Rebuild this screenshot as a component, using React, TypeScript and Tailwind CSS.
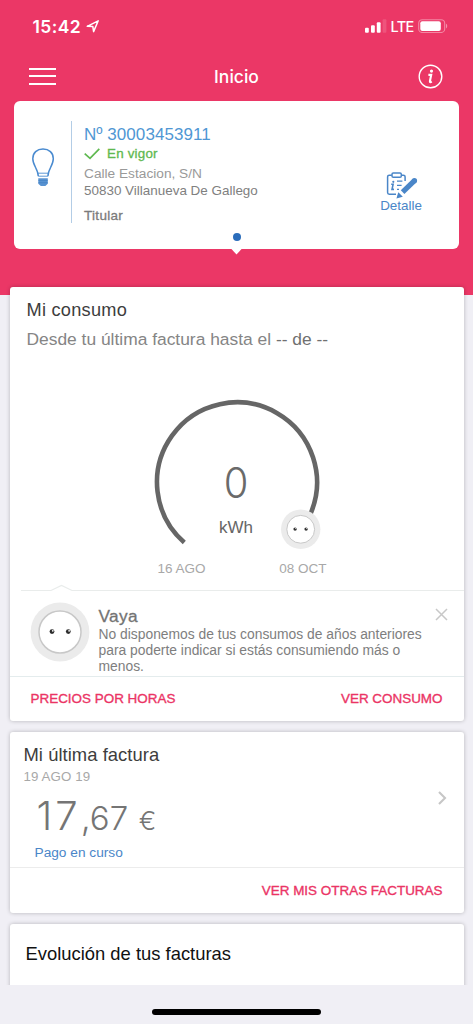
import type { ReactNode } from "react";

function StatusBar() {
  return (
    <div className="flex h-[51px] items-start justify-between pl-[32.5px] pr-[25.5px] pt-[16px] text-white">
      <div className="flex items-start gap-[4px]">
        <span className="w-[49px] whitespace-nowrap font-['Inter',sans-serif] text-[17.5px] font-semibold leading-[21px] tracking-[0.4px]">
          15:42
        </span>
        <svg className="mt-[3px]" width="14" height="14" viewBox="0 0 14 14" fill="none">
          <path d="M1.2 7.3 12.2 1.8 7.6 12.6 6.8 7.4Z" stroke="white" strokeWidth="1.5" strokeLinejoin="round" />
        </svg>
      </div>
      <div className="flex items-start">
        <svg className="mt-[3px]" width="22" height="14" viewBox="0 0 22 14" fill="white">
          <rect x="0" y="8.7" width="3.8" height="5" rx="1" />
          <rect x="6" y="6.3" width="3.8" height="7.4" rx="1" />
          <rect x="11.8" y="3.3" width="3.8" height="10.4" rx="1" />
          <rect x="17.6" y="0.3" width="3.8" height="13.4" rx="1" opacity="0.15" />
        </svg>
        <span className="ml-[4px] w-[24px] whitespace-nowrap font-['Inter',sans-serif] text-[14.5px] font-medium leading-[22px] tracking-[-0.7px]">
          LTE
        </span>
        <svg className="ml-[3px] mt-[3px]" width="30" height="14" viewBox="0 0 30 14" fill="none">
          <rect x="0.7" y="0.7" width="26" height="12.8" rx="3.6" stroke="white" strokeOpacity="0.4" strokeWidth="1.1" />
          <rect x="2.3" y="2.3" width="20.5" height="9.6" rx="2" fill="white" />
          <path d="M28 4.8c1.6.5 1.6 4.1 0 4.6Z" fill="white" fillOpacity="0.45" />
        </svg>
      </div>
    </div>
  );
}

function NavBar() {
  return (
    <div className="grid h-[50px] grid-cols-3 items-center pl-[29px] pr-[30px] text-white">
      <div className="flex w-[27px] flex-col gap-[5.5px]">
        <div className="h-[2px] bg-white" />
        <div className="h-[2px] bg-white" />
        <div className="h-[2px] bg-white" />
      </div>
      <h1 className="pl-[1px] pt-[2px] text-center font-['Inter',sans-serif] text-[17.5px] font-medium leading-[24px]">
        Inicio
      </h1>
      <svg className="justify-self-end" width="25" height="25" viewBox="0 0 25 25" fill="none">
        <circle cx="12.5" cy="12.5" r="11.3" stroke="white" strokeWidth="1.4" />
        <circle cx="13.5" cy="7.1" r="1.6" fill="white" />
        <path d="M10.4 10.9H13.2L11.9 17.2Q11.7 18.8 13.8 17.6" stroke="white" strokeWidth="2.1" />
      </svg>
    </div>
  );
}

function BulbIcon() {
  return (
    <svg width="24" height="40" viewBox="0 0 24 40" fill="none">
      <path
        d="M7.3 29.2C7.3 22.5 1.8 18.5 1.8 11.7 1.8 5.7 6 2 12 2s10.3 3.7 10.3 9.7c0 6.8-5.4 10.8-5.4 17.5"
        stroke="#4a8bd0"
        strokeWidth="1.5"
      />
      <path d="M6.8 26.2H17.4M7.4 29.2H16.8" stroke="#4a8bd0" strokeWidth="0.9" />
      <path d="M7.3 31.2h9.5v5.6l-2.4 2.2H9.8l-2.5-2.2Z" fill="#5893d2" />
      <path d="M7.3 33.4h9.5M7.3 35.7h9.5" stroke="#3f7dc0" strokeWidth="0.6" />
    </svg>
  );
}

function ContractIcon() {
  return (
    <svg width="32" height="28" viewBox="0 0 32 28" fill="none">
      <path
        d="M5.8 3.2H3.2Q1.6 3.2 1.6 4.8V20.6Q1.6 22.3 3.2 22.3H10M15.3 3.2H17.4Q19.1 3.2 19.1 4.8V9"
        stroke="#4a86c8"
        strokeWidth="1.5"
      />
      <rect x="6" y="1" width="9.3" height="4.3" rx="1.3" stroke="#4a86c8" strokeWidth="1.5" />
      <circle cx="7.3" cy="9.8" r="1.1" fill="#4a86c8" />
      <path d="M5.2 12.3H7.1L6 17.4H8" stroke="#4a86c8" strokeWidth="1.6" />
      <path d="M11 9.2H16.4M11 13.3H15.6M11 17.4H13" stroke="#4a86c8" strokeWidth="1.2" />
      <path d="M16.6 20.2 28.2 8.9" stroke="#4a86c8" strokeWidth="5.2" />
      <circle cx="28.4" cy="8.7" r="2.7" fill="#4a86c8" />
      <path d="M12.3 20.2 16.8 24.7 10.4 26.5Z" fill="#4a86c8" />
    </svg>
  );
}

function ContractCard() {
  return (
    <section className="relative mx-[14px] flex h-[148px] rounded-[6px] bg-white">
      <div className="flex w-[57px] justify-center pt-[45.5px]">
        <BulbIcon />
      </div>
      <div className="mt-[20px] h-[102px] w-px bg-[#b3cde6]" />
      <div className="flex flex-1 flex-col whitespace-nowrap pl-[12px] pt-[23.5px] text-[#8a8a8a]">
        <div className="text-[17px] leading-[20px] tracking-[0.05px] text-[#4f97d4]">Nº 30003453911</div>
        <div className="flex h-[18px] items-center gap-[7px] text-[#5fb950]">
          <svg width="16" height="12" viewBox="0 0 16 12" fill="none">
            <path d="M.7 5.7 6 10.4 15.3.9" stroke="currentColor" strokeWidth="1.7" />
          </svg>
          <span className="text-[13.4px] leading-[18px] tracking-[0.2px] [-webkit-text-stroke:0.3px]">En vigor</span>
        </div>
        <div className="mt-[2px] text-[13.7px] leading-[17px] text-[#999]">Calle Estacion, S/N</div>
        <div className="text-[13.45px] leading-[17px] text-[#808080]">50830 Villanueva De Gallego</div>
        <div className="mt-[8px] text-[13.5px] leading-[17px] tracking-[0.3px] text-[#7b7b7b] [-webkit-text-stroke:0.3px]">
          Titular
        </div>
      </div>
      <button className="mr-[37px] mt-[70.5px] flex flex-col items-center self-start">
        <span className="pl-[1.5px]">
          <ContractIcon />
        </span>
        <span className="mt-[-3px] text-[13.45px] leading-[17px] text-[#4a86c8]">Detalle</span>
      </button>
      <div className="absolute left-[218.5px] top-[132px] size-[8px] rounded-full bg-[#2b6dbb]" />
      <svg className="absolute left-[216px] top-[147px]" width="13" height="8" viewBox="0 0 13 8">
        <path d="M.5 0 6.5 6.5 12.5 0Z" fill="white" />
      </svg>
    </section>
  );
}

function Card({ children, className }: { children: ReactNode; className: string }) {
  return (
    <section
      className={`mx-auto w-[454px] rounded-[3px] bg-white shadow-[0_0_4px_rgba(0,0,0,0.24)] ${className}`}
    >
      {children}
    </section>
  );
}

function Gauge() {
  return (
    <div className="relative ml-[131.5px] mt-[48px] h-[178.5px] w-[190px] shrink-0">
      <svg width="190" height="178" viewBox="0 0 190 178" fill="none">
        <path d="M43.3 145.5A80 80 0 1 1 169 118" stroke="#666" strokeWidth="4.6" />
        <circle cx="159.7" cy="132.3" r="19.7" fill="#ebebeb" />
        <circle cx="159.7" cy="132.3" r="13.9" fill="white" stroke="#c8c8c8" strokeWidth="1" />
        <circle cx="154.1" cy="132.1" r="1.7" fill="#333" />
        <circle cx="165.1" cy="132.1" r="1.7" fill="#333" />
        <circle cx="154.8" cy="131.5" r="0.6" fill="white" />
        <circle cx="165.8" cy="131.5" r="0.6" fill="white" />
      </svg>
      <div className="absolute left-0 top-[61px] w-[190px] text-center font-['Inter',sans-serif] text-[42px] font-light leading-[50px] text-[#6a6a6a]">
        <span className="inline-block scale-x-95">0</span>
      </div>
      <div className="absolute left-0 top-[120.5px] w-[190px] text-center text-[17px] leading-[20px] text-[#666]">
        kWh
      </div>
    </div>
  );
}

function SocketFace() {
  return (
    <svg width="60" height="60" viewBox="0 0 60 60" fill="none">
      <circle cx="30" cy="30" r="29.4" fill="#ebebeb" />
      <circle cx="30" cy="30" r="21" fill="white" stroke="#c8c8c8" strokeWidth="1.5" />
      <circle cx="22" cy="29.6" r="2.4" fill="#2d2d2d" />
      <circle cx="38.3" cy="29.6" r="2.4" fill="#2d2d2d" />
      <circle cx="22.8" cy="28.8" r="0.9" fill="white" />
      <circle cx="39.1" cy="28.8" r="0.9" fill="white" />
    </svg>
  );
}

function ConsumptionCard() {
  return (
    <Card className="relative -mt-[8px] flex h-[434px] flex-col">
      <h2 className="pl-[17px] pt-[12px] text-[18.2px] leading-[22px] tracking-[0.25px] text-[#3d3d3d]">Mi consumo</h2>
      <p className="mt-[8px] pl-[17px] text-[17.4px] leading-[20px] text-[#858585]">
        Desde tu última factura hasta el <span className="text-[#707070]">-- de --</span>
      </p>
      <Gauge />
      <div className="mt-[-15px] flex h-[16px] justify-between pl-[148px] pr-[137px] text-[13.5px] leading-[16px] text-[#a8a8a8]">
        <span>16 AGO</span>
        <span>08 OCT</span>
      </div>
      <svg className="ml-[11px] mt-[7.5px] shrink-0" width="443" height="8" viewBox="0 0 443 8" fill="none">
        <path d="M0 6.5H30L40.5 1.5 51 6.5H443" stroke="#e9eceb" strokeWidth="1.2" />
      </svg>
      <div className="flex h-[83.5px] shrink-0 pl-[20px] pt-[10px]">
        <SocketFace />
        <div className="ml-[9px] mt-[3.5px] flex-1 whitespace-nowrap text-[#7e7e7e]">
          <h3 className="text-[17.3px] leading-[20px] tracking-[0.3px] text-[#747474] [-webkit-text-stroke:0.3px]">Vaya</h3>
          <p className="text-[13.85px] leading-[16px]">
            No disponemos de tus consumos de años anteriores
            <br />
            para poderte indicar si estás consumiendo más o
            <br />
            menos.
          </p>
        </div>
        <svg className="mr-[15.5px] mt-[6px]" width="13" height="13" viewBox="0 0 13 13" fill="none">
          <path d="M1 1 12 12M12 1 1 12" stroke="#c8c8c8" strokeWidth="1.5" />
        </svg>
      </div>
      <div className="flex flex-1 items-center justify-between border-t border-[#e4eced] pl-[21px] pr-[21px] text-[13.45px] text-[#eb3465] [-webkit-text-stroke:0.35px]">
        <button>PRECIOS POR HORAS</button>
        <button>VER CONSUMO</button>
      </div>
    </Card>
  );
}

function InvoiceCard() {
  return (
    <Card className="mt-[11px] flex h-[181px] flex-col">
      <div className="flex h-[135px] items-center justify-between pr-[17px]">
        <div className="flex flex-col self-start whitespace-nowrap pl-[14px] pt-[12px]">
          <h2 className="text-[18.4px] leading-[22px] tracking-[0.05px] text-[#3d3d3d]">Mi última factura</h2>
          <div className="mt-[3px] text-[13.3px] leading-[15px] tracking-[0.1px] text-[#a8a8a8]">19 AGO 19</div>
          <div className="ml-[13px] mt-[9px] flex h-[46px] items-baseline font-['Inter',sans-serif] font-light text-[#757575]">
            <span className="text-[40px] leading-[46px] tracking-[3px]">17</span>
            <span className="text-[36px] leading-[38px]">,</span>
            <span className="ml-[-1px] text-[33px] leading-[38px]">67</span>
            <span className="ml-[10.5px] text-[26px] leading-[32px]">€</span>
          </div>
          <div className="ml-[11px] mt-[5px] text-[13.7px] leading-[17px] text-[#4a86c8]">Pago en curso</div>
        </div>
        <svg className="mb-[4px]" width="10" height="16" viewBox="0 0 10 16" fill="none">
          <path d="M2 2 8 8 2 14" stroke="#c6c6c6" strokeWidth="2.1" />
        </svg>
      </div>
      <div className="flex flex-1 items-center justify-end border-t border-[#ececec] pr-[21px] pt-[2px] text-[13.45px] text-[#eb3465] [-webkit-text-stroke:0.35px]">
        <button>VER MIS OTRAS FACTURAS</button>
      </div>
    </Card>
  );
}

export default function App() {
  return (
    <div className="flex h-[1024px] w-[473px] flex-col overflow-hidden bg-[#f0eff5] font-['Liberation_Sans',Arial,sans-serif]">
      <header className="h-[295px] shrink-0 bg-[#eb3766]">
        <StatusBar />
        <NavBar />
        <ContractCard />
      </header>
      <main className="h-[690px] shrink-0 [clip-path:inset(-20px_0_0_0)]">
        <ConsumptionCard />
        <InvoiceCard />
        <Card className="mt-[11px] h-[80px]">
          <h2 className="pl-[16px] pt-[19px] text-[18.4px] leading-[22px] text-[#111]">Evolución de tus facturas</h2>
        </Card>
      </main>
      <div className="mx-auto mt-[23.5px] h-[6px] w-[169px] rounded-full bg-black" />
    </div>
  );
}
